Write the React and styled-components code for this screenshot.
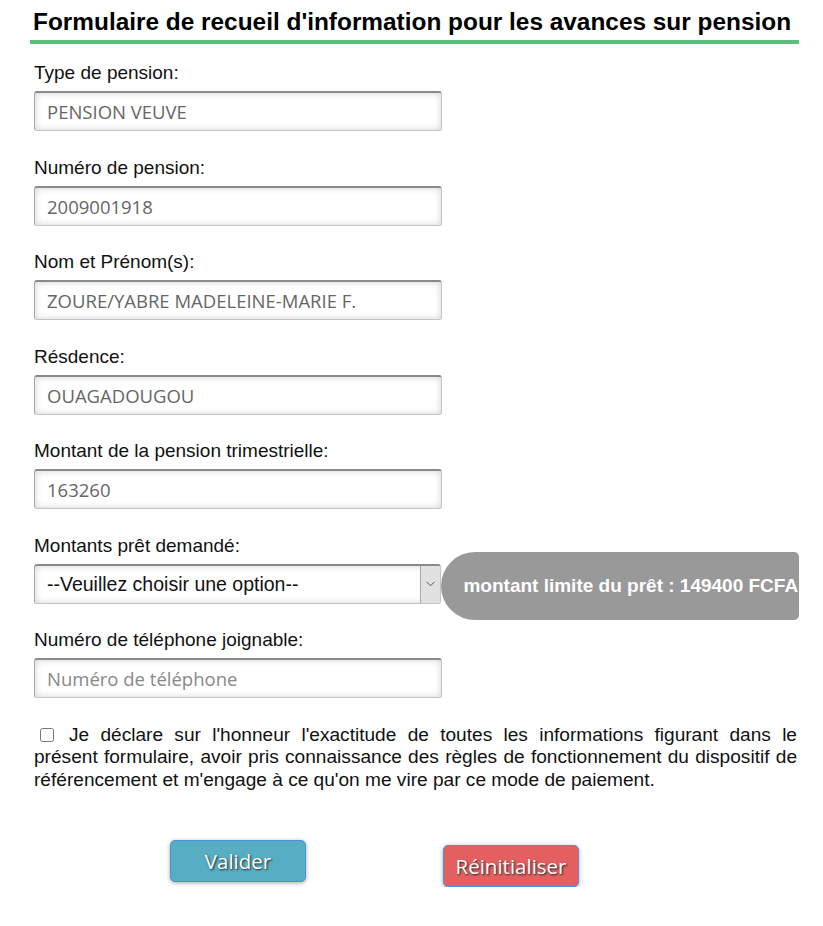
import React from "react";
import styled, { createGlobalStyle } from "styled-components";

const GlobalStyle = createGlobalStyle`
  body {
    margin: 0;
    background: #fff;
    font-family: "Liberation Sans", Arial, sans-serif;
  }
`;

const Page = styled.div`
  width: 769px;
  padding: 0 0 0 30px;
  overflow: hidden;
`;

const Title = styled.h2`
  margin: 0;
  padding: 8px 0 5px 3px;
  font-size: 24.4px;
  line-height: 27px;
  font-weight: bold;
  color: #000;
  border-bottom: 4px solid #5fbd7b;
  white-space: nowrap;
`;

const Form = styled.form`
  padding: 18px 0 0 4px;
`;

const Field = styled.div`
  margin-bottom: 25.5px;
`;

const Label = styled.label`
  display: block;
  font-size: 19px;
  line-height: 22px;
  color: #111;
  margin-bottom: 7px;
`;

const boxLook = `
  box-sizing: border-box;
  width: 408px;
  height: 40px;
  border: 1px solid #c4c4c4;
  border-top: 2px solid #8a8a8a;
  border-left-color: #a8a8a8;
  border-radius: 3px;
  background: #fff;
  box-shadow: inset 0 0 7px rgba(0, 0, 0, 0.18);
`;

const Input = styled.input`
  ${boxLook}
  display: block;
  padding: 0 12px;
  font-family: "Open Sans", "DejaVu Sans", sans-serif;
  font-size: 18.5px;
  color: #666;
  outline: none;
  &::placeholder {
    color: #888;
  }
`;

const SelectRow = styled.div`
  display: flex;
  align-items: center;
`;

const SelectBox = styled.div`
  ${boxLook}
  display: flex;
  overflow: hidden;
`;

const Select = styled.select`
  flex: 1;
  appearance: none;
  border: none;
  background: transparent;
  padding: 0 0 0 12px;
  font-family: "Liberation Sans", Arial, sans-serif;
  font-size: 19.5px;
  color: #111;
  outline: none;
`;

const ArrowBox = styled.span`
  width: 19px;
  display: flex;
  align-items: center;
  justify-content: center;
  background: #e1e1e1;
  border-left: 1px solid #a8a8a8;
  svg {
    width: 9px;
    height: 6px;
  }
`;

const LimitPill = styled.div`
  box-sizing: border-box;
  width: 358px;
  height: 68px;
  margin: -12px 0 -16px 0;
  padding-left: 22px;
  display: flex;
  align-items: center;
  background: #999;
  border-radius: 34px 5px 5px 34px;
  color: #fff;
  font-weight: bold;
  font-size: 19px;
  white-space: nowrap;
  overflow: hidden;
`;

const Declaration = styled.p`
  margin: 2px 0 0 0;
  width: 763px;
  font-size: 19.1px;
  line-height: 22.5px;
  color: #111;
  text-align: justify;
  input {
    width: 14px;
    height: 14px;
    margin: 0 15px 0 6px;
    vertical-align: -1px;
  }
`;

const Buttons = styled.div`
  display: flex;
  align-items: flex-start;
  gap: 137px;
  padding: 49px 0 0 136px;
`;

const Button = styled.button`
  box-sizing: border-box;
  width: 136px;
  height: 42px;
  margin-top: ${(p) => p.$offset || 0}px;
  border: 1px solid #4d90e0;
  border-radius: 5px;
  background: ${(p) => p.$bg};
  box-shadow: 0 1px 4px rgba(0, 0, 0, 0.35);
  color: #fff;
  font-family: "Open Sans", "DejaVu Sans", sans-serif;
  font-size: 20.5px;
  text-shadow: 1px 1px 2px #222;
  cursor: pointer;
`;

const fields = [
  ["Type de pension:", "PENSION VEUVE"],
  ["Numéro de pension:", "2009001918"],
  ["Nom et Prénom(s):", "ZOURE/YABRE MADELEINE-MARIE F."],
  ["Résdence:", "OUAGADOUGOU"],
  ["Montant de la pension trimestrielle:", "163260"],
];

export default function App() {
  return (
    <Page>
      <GlobalStyle />
      <Title>Formulaire de recueil d'information pour les avances sur pension</Title>
      <Form onSubmit={(e) => e.preventDefault()}>
        {fields.map(([label, value]) => (
          <Field key={label}>
            <Label>{label}</Label>
            <Input defaultValue={value} readOnly />
          </Field>
        ))}
        <Field>
          <Label>Montants prêt demandé:</Label>
          <SelectRow>
            <SelectBox>
              <Select defaultValue="">
                <option value="">--Veuillez choisir une option--</option>
              </Select>
              <ArrowBox>
                <svg viewBox="0 0 9 6" fill="none" stroke="#555" strokeWidth="1">
                  <path d="M0.5 0.8 L4.5 4.8 L8.5 0.8" />
                </svg>
              </ArrowBox>
            </SelectBox>
            <LimitPill>montant limite du prêt : 149400 FCFA</LimitPill>
          </SelectRow>
        </Field>
        <Field>
          <Label>Numéro de téléphone joignable:</Label>
          <Input placeholder="Numéro de téléphone" />
        </Field>
        <Declaration>
          <input type="checkbox" />
          Je déclare sur l'honneur l'exactitude de toutes les informations figurant dans le
          présent formulaire, avoir pris connaissance des règles de fonctionnement du dispositif de
          référencement et m'engage à ce qu'on me vire par ce mode de paiement.
        </Declaration>
        <Buttons>
          <Button type="submit" $bg="#57adc1">Valider</Button>
          <Button type="reset" $bg="#e45f60" $offset={5}>Réinitialiser</Button>
        </Buttons>
      </Form>
    </Page>
  );
}
